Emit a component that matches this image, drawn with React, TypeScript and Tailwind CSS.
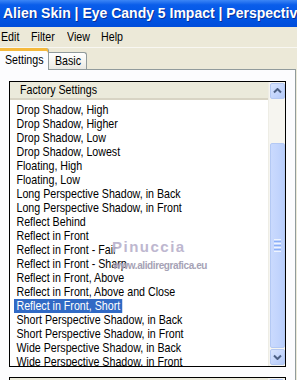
import React from "react";

const presets = [
  "Drop Shadow, High",
  "Drop Shadow, Higher",
  "Drop Shadow, Low",
  "Drop Shadow, Lowest",
  "Floating, High",
  "Floating, Low",
  "Long Perspective Shadow, in Back",
  "Long Perspective Shadow, in Front",
  "Reflect Behind",
  "Reflect in Front",
  "Reflect in Front - Fair",
  "Reflect in Front - Sharp",
  "Reflect in Front, Above",
  "Reflect in Front, Above and Close",
  "Reflect in Front, Short",
  "Short Perspective Shadow, in Back",
  "Short Perspective Shadow, in Front",
  "Wide Perspective Shadow, in Back",
  "Wide Perspective Shadow, in Front",
];

const selected = 14;

// the dialog font is a condensed Tahoma-ish face, squeeze Arial metrics to match
function Narrow({ children, className = "" }: { children: React.ReactNode; className?: string }) {
  return (
    <span className={"inline-block origin-left scale-x-[0.82] whitespace-nowrap " + className}>
      {children}
    </span>
  );
}

function Chevron({ down = false }: { down?: boolean }) {
  return (
    <svg width="9" height="6" viewBox="0 0 9 6">
      <path
        d={down ? "M1 1.5 L4.5 5 L8 1.5" : "M1 4.5 L4.5 1 L8 4.5"}
        fill="none"
        stroke="#4D6185"
        strokeWidth="2"
      />
    </svg>
  );
}

function ScrollButton({ down = false }: { down?: boolean }) {
  return (
    <div className="mx-px h-[16px] w-[15px] shrink-0 flex items-center justify-center rounded-[2px] border border-[#B4C8F2] bg-[linear-gradient(135deg,#D9E5FE_0%,#C2D4FC_60%,#B4C9F6_100%)]">
      <Chevron down={down} />
    </div>
  );
}

function AppIcon() {
  return (
    <svg width="14" height="15" viewBox="0 0 14 15">
      <ellipse cx="7" cy="7.5" rx="6.5" ry="7" fill="#0c0c0c" />
      <ellipse cx="5" cy="6" rx="2.6" ry="2" fill="#e8e8e8" />
      <ellipse cx="9.5" cy="6.5" rx="1.4" ry="1.2" fill="#8c8c8c" />
      <path d="M4 10 Q7 12 10 10" stroke="#555" strokeWidth="1" fill="none" />
    </svg>
  );
}

export default function App() {
  return (
    <div className="relative w-[297px] h-[380px] overflow-hidden bg-[#ECE9D8] flex flex-col font-['Liberation_Sans',sans-serif] text-[13px] text-black">
      {/* title bar */}
      <div className="h-[27px] shrink-0 flex items-center pl-[1px] bg-[linear-gradient(180deg,#3C86F6_0%,#0A5DEA_18%,#0055E5_60%,#004DDA_100%)]">
        <AppIcon />
        <span className="ml-[2px] whitespace-nowrap text-[14px] font-bold text-white [text-shadow:1px_1px_#0B2F95]">
          Alien Skin | Eye Candy 5 Impact | Perspective
        </span>
      </div>

      {/* menu */}
      <div className="h-[20px] shrink-0 flex items-center pl-[1px]">
        <div className="w-[30px]"><Narrow>Edit</Narrow></div>
        <div className="w-[36px]"><Narrow>Filter</Narrow></div>
        <div className="w-[34px]"><Narrow>View</Narrow></div>
        <div className="w-[30px]"><Narrow>Help</Narrow></div>
      </div>
      <div className="h-px shrink-0 bg-[#F8F7F2]" />

      {/* tabs */}
      <div className="h-[21px] shrink-0 flex items-end">
        <div className="relative z-10 -mb-px h-[22px] w-[49px] flex items-center pl-[5px] pt-[2px] rounded-tr-[3px] border-r border-[#919B9C] bg-[#FCFCFE] shadow-[inset_0_3px_0_#F5B93C,inset_0_2px_0_#FFD36A]">
          <Narrow>Settings</Narrow>
        </div>
        <div className="h-[17px] w-[38px] flex items-center pl-[6px] rounded-tr-[3px] border-t border-r border-[#919B9C] bg-[linear-gradient(180deg,#FFFFFF_0%,#F4F3EE_60%,#E9E8E2_100%)]">
          <Narrow>Basic</Narrow>
        </div>
      </div>

      {/* panel */}
      <div className="w-[296px] flex-1 border-t border-r border-[#919B9C] bg-[#FCFCFE] pl-[9px] pt-[11px]">
        <div className="h-[286px] w-[277px] flex border border-black bg-white">
          <div className="flex-1 flex flex-col overflow-hidden">
            <div className="h-[18px] shrink-0 flex items-center pl-[10px] bg-[#EBEADB] border-b-[2px] border-[#D8D4C4]">
              <Narrow>Factory Settings</Narrow>
            </div>
            <div className="pt-[3px]">
              {presets.map((p, i) => (
                <div key={p} className="h-[14px] leading-[14px] pl-[4px]">
                  <Narrow className={i === selected ? "h-[14px] px-[3px] bg-[#316AC5] text-white" : "h-[14px] px-[3px]"}>
                    {p}
                  </Narrow>
                </div>
              ))}
            </div>
          </div>

          {/* scrollbar */}
          <div className="w-[17px] shrink-0 flex flex-col pt-px bg-[#F6F5F0] border-l border-[#EEEDE5]">
            <ScrollButton />
            <div className="h-[44px] shrink-0" />
            <div className="mx-px h-[205px] w-[15px] shrink-0 flex flex-col items-center justify-center gap-[1px] rounded-[2px] border border-[#B4C9F4] bg-[linear-gradient(90deg,#CADAFE_0%,#C3D5FD_50%,#B9CEFB_100%)]">
              <div className="h-px w-[7px] bg-[#EEF4FE]" />
              <div className="h-px w-[7px] bg-[#8CB0F8]" />
              <div className="h-px w-[7px] bg-[#EEF4FE]" />
              <div className="h-px w-[7px] bg-[#8CB0F8]" />
              <div className="h-px w-[7px] bg-[#EEF4FE]" />
              <div className="h-px w-[7px] bg-[#8CB0F8]" />
              <div className="h-px w-[7px] bg-[#EEF4FE]" />
            </div>
            <div className="flex-1" />
            <ScrollButton down />
            <div className="h-px shrink-0" />
          </div>
        </div>

        {/* next list, cut off */}
        <div className="mt-[10px] h-[30px] w-[277px] flex border border-black bg-white">
          <div className="flex-1 bg-[#EBEADB]" />
          <div className="w-[17px] pt-px bg-[#F6F5F0]">
            <ScrollButton />
          </div>
        </div>
      </div>

      {/* watermark */}
      <span className="absolute left-[112px] top-[239px] leading-none whitespace-nowrap text-[15px] font-bold tracking-[1.5px] text-[#B7B0CB] opacity-90 [text-shadow:0_0_1px_#ffffff]">
        Pinuccia
      </span>
      <span className="absolute left-[113px] top-[261px] leading-none whitespace-nowrap text-[10px] font-bold tracking-[-0.4px] text-[#9C98AE] opacity-90 [text-shadow:0_0_1px_#ffffff]">
        www.alidiregrafica.eu
      </span>
    </div>
  );
}
